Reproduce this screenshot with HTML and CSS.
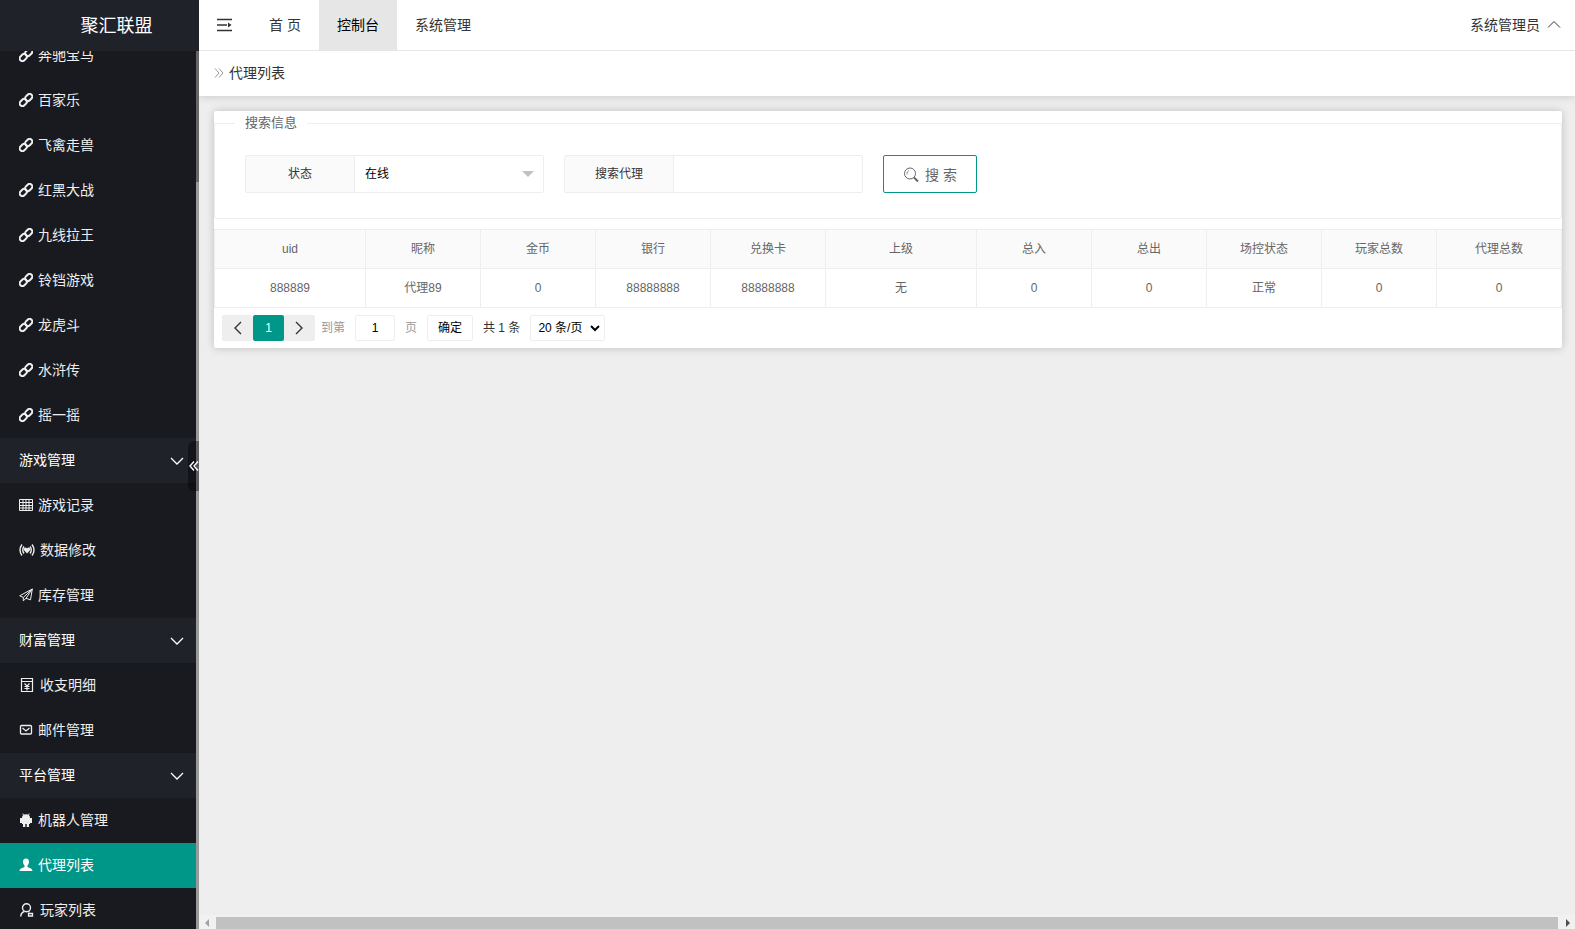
FILE: index.html
```
<!DOCTYPE html>
<html lang="zh-CN">
<head>
    <meta charset="UTF-8">
    <meta name="viewport" content="width=device-width, initial-scale=1.0">
    <title>聚汇联盟 - 代理列表</title>
    <link rel="stylesheet" href="styles.css">
</head>
<body>
    <!-- 图标 -->
    <svg class="sprite" width="0" height="0" aria-hidden="true">
        <symbol id="i-link" viewBox="0 0 16 16">
            <g fill="none" stroke="currentColor" stroke-width="2.3">
                <rect x="6.6" y="2" width="9" height="6.2" rx="3.1" transform="rotate(-45 11.1 5.1)"/>
                <rect x="0.4" y="7.8" width="9" height="6.2" rx="3.1" transform="rotate(-45 4.9 10.9)"/>
            </g>
        </symbol>
        <symbol id="i-down" viewBox="0 0 14 14">
            <path d="M1 4l6 6 6-6" fill="none" stroke="currentColor" stroke-width="1.3"/>
        </symbol>
        <symbol id="i-left" viewBox="0 0 14 14">
            <path d="M10 1L4 7l6 6" fill="none" stroke="currentColor" stroke-width="1.4"/>
        </symbol>
        <symbol id="i-right" viewBox="0 0 14 14">
            <path d="M3 1l6 6-6 6" fill="none" stroke="currentColor" stroke-width="1.4"/>
        </symbol>
    </svg>

    <div class="layout">
        <aside class="side">
            <div class="logo">聚汇联盟</div>
            <nav class="side-scroll">
                <ul class="side-nav">
                    <li><a href="#"><svg class="icon"><use href="#i-link"/></svg>奔驰宝马</a></li>
                    <li><a href="#"><svg class="icon"><use href="#i-link"/></svg>百家乐</a></li>
                    <li><a href="#"><svg class="icon"><use href="#i-link"/></svg>飞禽走兽</a></li>
                    <li><a href="#"><svg class="icon"><use href="#i-link"/></svg>红黑大战</a></li>
                    <li><a href="#"><svg class="icon"><use href="#i-link"/></svg>九线拉王</a></li>
                    <li><a href="#"><svg class="icon"><use href="#i-link"/></svg>铃铛游戏</a></li>
                    <li><a href="#"><svg class="icon"><use href="#i-link"/></svg>龙虎斗</a></li>
                    <li><a href="#"><svg class="icon"><use href="#i-link"/></svg>水浒传</a></li>
                    <li><a href="#"><svg class="icon"><use href="#i-link"/></svg>摇一摇</a></li>
                    <li class="group"><a href="#">游戏管理<svg class="arrow"><use href="#i-down"/></svg></a></li>
                    <li><a href="#"><svg class="icon" viewBox="0 0 14 14"><path d="M.5 1.5h13v11H.5zM1 4.500h12M1 7.500h12M1 10h12M4 2v10M7 2v10M10 2v10" fill="none" stroke="currentColor"/></svg>游戏记录</a></li>
                    <li><a href="#"><svg class="icon wide" viewBox="0 0 16 14"><path d="M3 1.5Q-1 7 3 12.5M13 1.5Q17 7 13 12.5M5 3.5Q2.500 7 5 10.5M11 3.5Q13.5 7 11 10.5" fill="none" stroke="currentColor" stroke-width="1.4"/><path d="M8 10.5L5 7.300Q4.500 4.600 6.300 4.400 7.500 4.400 8 5.500 8.500 4.400 9.700 4.400 11.500 4.600 11 7.300z" fill="currentColor"/></svg>数据修改</a></li>
                    <li><a href="#"><svg class="icon" viewBox="0 0 14 14"><path d="M13.3 1L.7 7.800l3.600 1.700L13.300 1l-1.800 10.800L7 10.300M4.300 9.500v3.300L7 10.300 13.300 1" fill="none" stroke="currentColor" stroke-linejoin="round"/></svg>库存管理</a></li>
                    <li class="group"><a href="#">财富管理<svg class="arrow"><use href="#i-down"/></svg></a></li>
                    <li><a href="#"><svg class="icon wide" viewBox="0 0 16 14"><path d="M2.500.5h11v3h-11zM2.500 3.500v10h11v-10M5.500 5.500L8 8l2.500-2.500M8 8v4.500M5.500 8.500h5M5.500 10.500h5" fill="none" stroke="currentColor" stroke-width="1.2"/></svg>收支明细</a></li>
                    <li><a href="#"><svg class="icon" viewBox="0 0 14 14"><rect x="1.5" y="2.5" width="11" height="8.5" rx="1" fill="none" stroke="currentColor" stroke-width="1.3"/><path d="M3.500 5L7 8l3.500-3" fill="none" stroke="currentColor" stroke-width="1.2"/></svg>邮件管理</a></li>
                    <li class="group"><a href="#">平台管理<svg class="arrow"><use href="#i-down"/></svg></a></li>
                    <li><a href="#"><svg class="icon" viewBox="0 0 14 14"><path d="M3 5Q3 1.300 7 1.300T11 5v6H3zM1 5h12v5H1zM4 10.500h2.300v3.500H4zM7.700 10.500H10v3.500H7.700z" fill="currentColor"/><path d="M4.500 2L3.800.6M9.500 2l.7-1.400" stroke="currentColor"/></svg>机器人管理</a></li>
                    <li class="active"><a href="#"><svg class="icon" viewBox="0 0 14 14"><path d="M7 .5C4.800.5 4 2 4 3.800c0 1.700.7 2.900 1.500 3.600v1.300C5.300 9.800.5 9.800.5 13h13c0-3.200-4.800-3.200-5-4.300V7.400C9.300 6.700 10 5.500 10 3.800 10 2 9.200.5 7 .5z" fill="currentColor"/></svg>代理列表</a></li>
                    <li><a href="#"><svg class="icon wide" viewBox="0 0 16 14"><circle cx="7.500" cy="4.800" r="4" fill="none" stroke="currentColor" stroke-width="1.4"/><path d="M5.500 8.500Q2 9.500 1.700 13.500M9.500 8.500l1 .7" fill="none" stroke="currentColor" stroke-width="1.4"/><path d="M9.500 10.500h4v2.500h-4z" fill="none" stroke="currentColor" stroke-width="1.3"/></svg>玩家列表</a></li>
                </ul>
                <div class="side-bar"><div class="side-thumb"></div></div>
            </nav>
            <button class="fold" type="button" aria-label="收起菜单">
                <svg width="10" height="10" viewBox="0 0 10 10"><path d="M5 .5L1 5l4 4.500M9 .5L5 5l4 4.500" fill="none" stroke="currentColor" stroke-width="1.4"/></svg>
            </button>
        </aside>

        <div class="main">
            <header class="header">
                <a class="toggle" href="#" aria-label="菜单">
                    <svg width="16" height="14" viewBox="0 0 16 14"><path d="M0 1.500h15M0 7h10M0 12.500h15" stroke="currentColor" stroke-width="1.6"/><path d="M11 4.500L14.500 7 11 9.500z" fill="currentColor"/></svg>
                </a>
                <nav class="tabs">
                    <a href="#">首 页</a>
                    <a class="current" href="#">控制台</a>
                    <a href="#">系统管理</a>
                </nav>
                <a class="user" href="#">系统管理员<svg width="14" height="14" viewBox="0 0 14 14"><path d="M1 9.500l6-6 6 6" fill="none" stroke="currentColor"/></svg></a>
            </header>

            <div class="crumb">
                <svg width="10" height="10" viewBox="0 0 10 10"><path d="M1 .5L5 5 1 9.500M5 .5L9 5 5 9.500" fill="none" stroke="#999"/></svg>
                <span>代理列表</span>
            </div>

            <main class="content">
                <section class="card">
                    <form>
                        <fieldset class="search">
                            <legend>搜索信息</legend>
                            <div class="form-row">
                                <div class="field">
                                    <label for="status">状态</label>
                                    <div class="select-box">
                                        <select id="status"><option>在线</option><option>离线</option></select>
                                    </div>
                                </div>
                                <div class="field">
                                    <label for="agent">搜索代理</label>
                                    <input id="agent" type="text">
                                </div>
                                <button class="btn-search" type="button">
                                    <svg width="16" height="16" viewBox="0 0 16 16"><circle cx="7" cy="6.500" r="5.500" fill="none" stroke="currentColor"/><path d="M4 7.500Q3.500 4.500 6 3.500" fill="none" stroke="currentColor" stroke-width=".7"/><path d="M11 10.500l4 4" stroke="currentColor" stroke-width="2"/></svg>
                                    搜 索
                                </button>
                            </div>
                        </fieldset>
                    </form>

                    <table class="grid">
                        <colgroup>
                            <col class="w-lg"><col class="w-md"><col class="w-md"><col class="w-md"><col class="w-md"><col class="w-lg"><col class="w-md"><col class="w-md"><col class="w-md"><col class="w-md"><col>
                        </colgroup>
                        <thead>
                            <tr><th>uid</th><th>昵称</th><th>金币</th><th>银行</th><th>兑换卡</th><th>上级</th><th>总入</th><th>总出</th><th>场控状态</th><th>玩家总数</th><th>代理总数</th></tr>
                        </thead>
                        <tbody>
                            <tr><td>888889</td><td>代理89</td><td>0</td><td>88888888</td><td>88888888</td><td>无</td><td>0</td><td>0</td><td>正常</td><td>0</td><td>0</td></tr>
                        </tbody>
                    </table>

                    <div class="pager">
                        <div class="pages">
                            <button type="button" aria-label="上一页"><svg width="14" height="14"><use href="#i-left"/></svg></button>
                            <button class="on" type="button">1</button>
                            <button type="button" aria-label="下一页"><svg width="14" height="14"><use href="#i-right"/></svg></button>
                        </div>
                        <div class="skip">
                            <label for="page">到第</label>
                            <input id="page" type="text" value="1">
                            <span>页</span>
                            <button type="button">确定</button>
                        </div>
                        <span class="total">共 1 条</span>
                        <div class="limit">
                            <select aria-label="每页条数"><option>20 条/页</option><option>50 条/页</option></select>
                            <svg width="10" height="8" viewBox="0 0 10 8"><path d="M1 2l4 4 4-4" fill="none" stroke="#000" stroke-width="2"/></svg>
                        </div>
                    </div>
                </section>
            </main>

            <div class="hscroll">
                <svg width="17" height="14" viewBox="0 0 17 14"><path d="M10 4v8L6 8z" fill="#a3a3a3"/></svg>
                <div class="hthumb"></div>
                <svg width="17" height="14" viewBox="0 0 17 14"><path d="M8 4v8l4-4z" fill="#505050"/></svg>
            </div>
        </div>
    </div>
</body>
</html>
```
FILE: styles.css
```
* {
    box-sizing: border-box;
}

body {
    margin: 0;
    font: 14px/24px "Liberation Sans", "Noto Sans CJK SC", sans-serif;
    color: #333;
    background: #eee;
}

a {
    color: inherit;
    text-decoration: none;
}

ul {
    margin: 0;
    padding: 0;
    list-style: none;
}

button,
input,
select {
    font: inherit;
    color: inherit;
    margin: 0;
    outline: none;
}

.sprite {
    position: absolute;
}

.layout {
    display: flex;
    height: 100vh;
    overflow: hidden;
}

/* 左侧菜单 */
.side {
    position: relative;
    display: flex;
    flex-direction: column;
    flex: 0 0 199px;
    color: #fff;
    background: #191a1f;
}

.logo {
    flex: none;
    height: 51px;
    padding: 2px 0 0 34px;
    line-height: 49px;
    font-size: 18px;
    text-align: center;
    background: #20222a;
}

.side-scroll {
    display: flex;
    flex: 1;
    min-height: 0;
    overflow: hidden;
}

.side-nav {
    flex: 1;
    margin-top: -18px;
}

.side-nav a {
    display: flex;
    align-items: center;
    gap: 5px;
    height: 45px;
    padding: 0 12px 2px 19px;
    color: #eee;
}

.side-nav .group a {
    justify-content: space-between;
    color: #fff;
    background: #20222a;
}

.side-nav .active a {
    color: #fff;
    background: #009688;
}

.icon {
    flex: none;
    width: 14px;
    height: 14px;
}

.icon.wide {
    width: 16px;
}

.arrow {
    width: 14px;
    height: 14px;
    margin-top: 2px;
}

.side-bar {
    width: 3px;
    background: #999;
}

.side-thumb {
    height: 131px;
    background: #666;
}

.fold {
    position: absolute;
    top: 441px;
    right: 0;
    display: flex;
    align-items: center;
    justify-content: center;
    width: 11px;
    height: 50px;
    padding: 0;
    border: 0;
    border-radius: 6px 0 0 6px;
    color: #fff;
    background: rgba(0, 0, 0, 0.4);
}

/* 顶部 */
.main {
    display: flex;
    flex-direction: column;
    flex: 1;
    min-width: 0;
}

.header {
    position: relative;
    z-index: 1;
    display: flex;
    flex: none;
    height: 51px;
    border-bottom: 1px solid #e6e6e6;
    line-height: 50px;
    background: #fff;
}

.toggle {
    display: flex;
    align-items: center;
    padding: 0 18px;
}

.tabs {
    display: flex;
    flex: 1;
}

.tabs a {
    padding: 0 18px;
}

.tabs .current {
    color: #000;
    background: #e6e6e6;
}

.user {
    display: flex;
    align-items: center;
    gap: 7px;
    padding-right: 14px;
}

.crumb {
    display: flex;
    flex: none;
    align-items: center;
    gap: 5px;
    height: 45px;
    padding: 0 15px 2px;
    background: #fff;
    box-shadow: 0 1px 8px rgba(0, 0, 0, 0.15);
}

.content {
    flex: 1;
    padding: 15px 13px 15px 15px;
}

/* 卡片 */
.card {
    border-radius: 2px;
    background: #fff;
    box-shadow: 0 0 8px rgba(0, 0, 0, 0.2);
}

.search {
    min-width: 0;
    margin: 0 0 10px;
    padding: 20px 30px 25px;
    border: 1px solid #eee;
    border-radius: 2px;
}

.search legend {
    margin-left: -10px;
    padding: 0 10px;
    font-size: 13px;
    color: #666;
}

.form-row {
    display: flex;
    flex-wrap: wrap;
    gap: 20px;
    font-size: 12px;
}

.field {
    display: flex;
    width: 299px;
    height: 38px;
    border: 1px solid #eee;
    border-radius: 2px;
}

.field label {
    flex: 0 0 109px;
    border-right: 1px solid #eee;
    line-height: 36px;
    text-align: center;
    background: #fafafa;
}

.field input,
.field select {
    width: 100%;
    min-width: 0;
    height: 36px;
    padding: 0 10px;
    border: 0;
    appearance: none;
    background: #fff;
}

.select-box {
    position: relative;
    flex: 1;
    color: #000;
}

.select-box::after {
    content: "";
    position: absolute;
    top: 15px;
    right: 9px;
    border: 6px solid transparent;
    border-top-color: #c2c2c2;
    border-bottom: 0;
    pointer-events: none;
}

.btn-search {
    display: flex;
    align-items: center;
    justify-content: center;
    gap: 6px;
    width: 94px;
    height: 38px;
    padding: 2px 0 0;
    border: 1px solid #009688;
    border-radius: 2px;
    font-size: 14px;
    color: #666;
    background: #fff;
}

/* 表格 */
.grid {
    width: 100%;
    border-collapse: collapse;
    table-layout: fixed;
    font-size: 12px;
    color: #666;
}

.grid th,
.grid td {
    height: 39px;
    padding: 0;
    border: 1px solid #eee;
    font-weight: normal;
    text-align: center;
}

.grid th {
    background: #fafafa;
}

.w-lg {
    width: 151px;
}

.w-md {
    width: 115px;
}

/* 分页 */
.pager {
    display: flex;
    align-items: center;
    gap: 10px;
    height: 40px;
    padding: 0 8px;
    font-size: 12px;
}

.pages {
    display: flex;
}

.pages button {
    display: flex;
    align-items: center;
    justify-content: center;
    width: 31px;
    height: 26px;
    padding: 0;
    border: 0;
    border-radius: 2px;
    background: #eee;
}

.pages .on {
    color: #fff;
    background: #009688;
}

.skip {
    display: flex;
    align-items: center;
    gap: 10px;
    margin-left: -4px;
    color: #999;
}

.skip input,
.skip button,
.limit select {
    height: 26px;
    padding: 0;
    border: 1px solid #eee;
    border-radius: 2px;
    color: #000;
    background: #fff;
}

.skip input {
    width: 40px;
    text-align: center;
}

.skip button {
    width: 46px;
}

.limit {
    position: relative;
}

.limit select {
    width: 75px;
    padding-left: 7px;
    appearance: none;
}

.limit svg {
    position: absolute;
    top: 9px;
    right: 5px;
    pointer-events: none;
}

/* 横向滚动条 */
.hscroll {
    display: flex;
    flex: none;
    height: 14px;
    background: #f1f1f1;
}

.hthumb {
    flex: 1;
    margin-top: 2px;
    background: #c1c1c1;
}
```
